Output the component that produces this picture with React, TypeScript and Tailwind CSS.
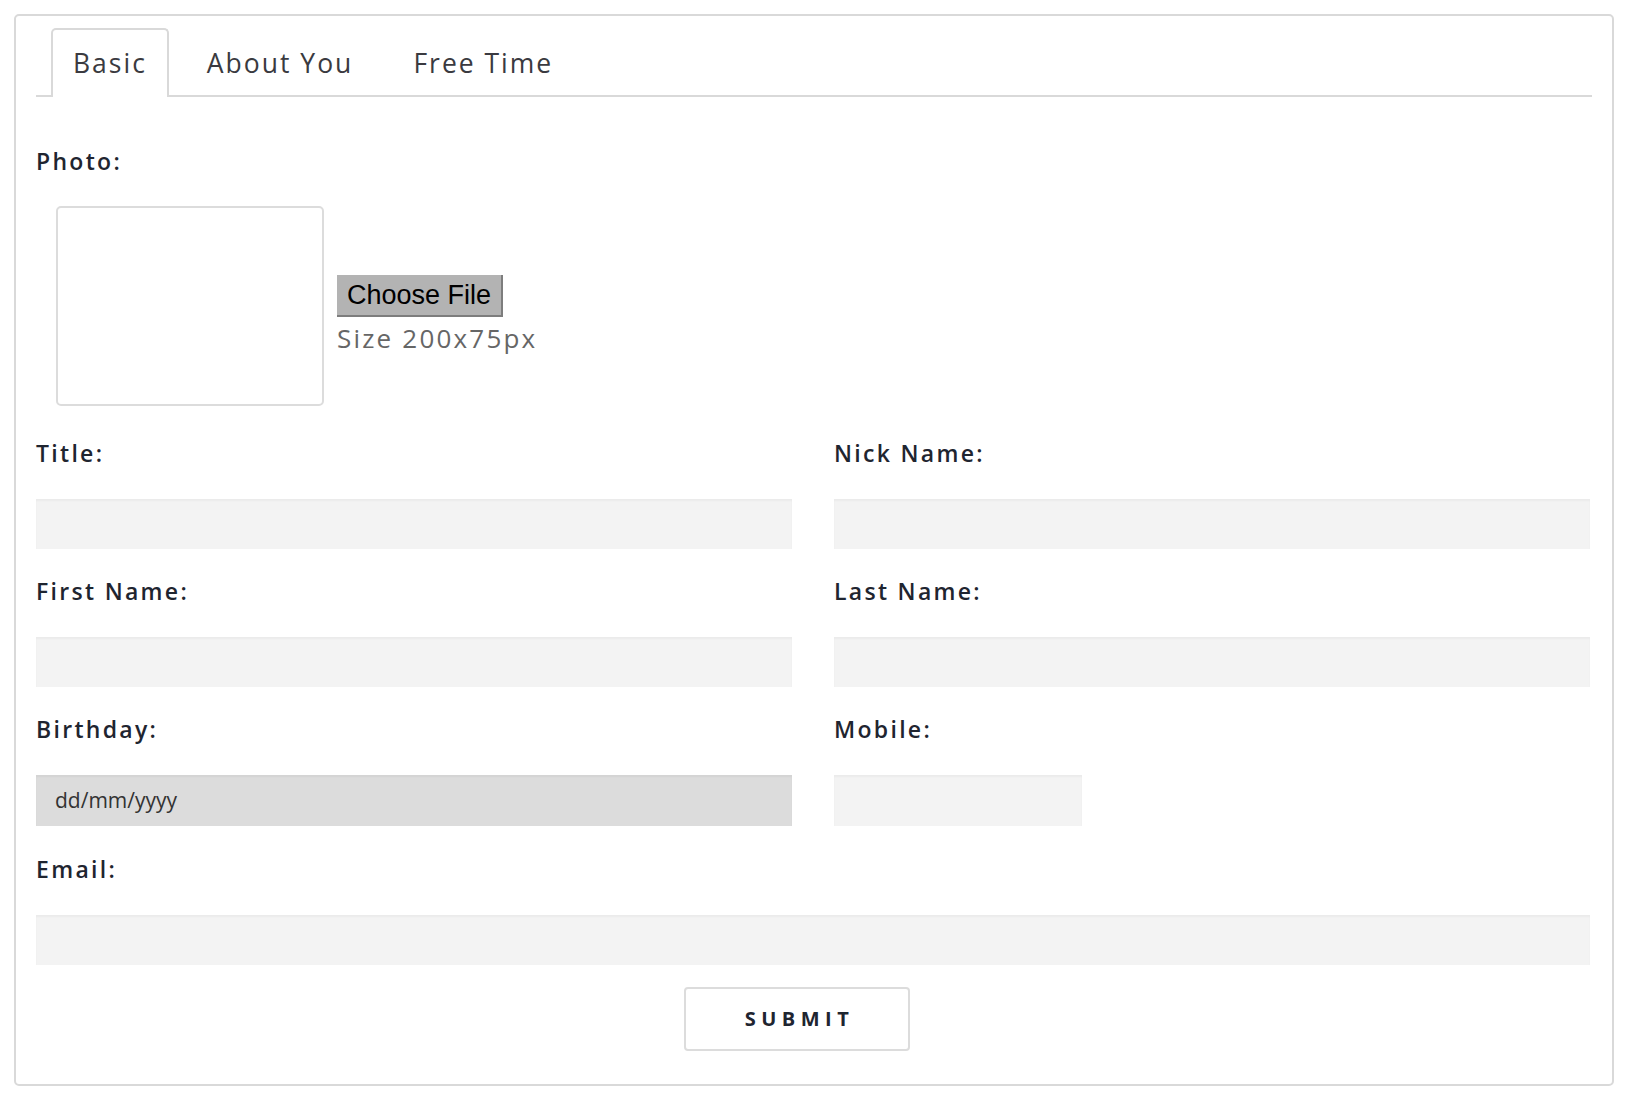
import React from "react";

const font = { fontFamily: '"Open Sans", "Liberation Sans", sans-serif' };

function Label({ children }: { children: React.ReactNode }) {
  return (
    <div className="h-[30px] leading-[30px] text-[23px] font-semibold tracking-[2.3px] text-[#1f2530]">
      {children}
    </div>
  );
}

function Field({ label, children }: { label: string; children: React.ReactNode }) {
  return (
    <div className="flex flex-col">
      <Label>{label}</Label>
      <div className="mt-[31px]">{children}</div>
    </div>
  );
}

function Input({ className = "" }: { className?: string }) {
  return (
    <div
      className={`h-[50px] bg-[#f3f3f3] shadow-[inset_0_2px_2px_rgba(0,0,0,0.035)] ${className}`}
    />
  );
}

export default function App() {
  return (
    <div className="bg-white min-h-[1096px] px-[14px] pt-[14px]" style={font}>
      <div className="border-2 border-[#d9d9d9] rounded-[5px] px-[20px] pt-[12px] pb-[33px]">
        {/* Tabs */}
        <div className="flex items-end gap-[16px] border-b-2 border-[#d9d9d9] pl-[15px]">
          <div className="h-[69px] px-[20px] border-2 border-b-0 border-[#d9d9d9] rounded-t-[5px] bg-white -mb-[2px] flex items-center text-[26.5px] tracking-[2px] text-[#3a3a40]">
            Basic
          </div>
          <div className="h-[69px] px-[20px] border-2 border-transparent border-b-0 -mb-[2px] flex items-center text-[26.5px] tracking-[2px] text-[#3a3a40]">
            About You
          </div>
          <div className="h-[69px] px-[20px] border-2 border-transparent border-b-0 -mb-[2px] flex items-center text-[26.5px] tracking-[2px] text-[#3a3a40]">
            Free Time
          </div>
        </div>

        {/* Photo */}
        <div className="mt-[49px]">
          <Label>Photo:</Label>
        </div>
        <div className="mt-[30px] ml-[20px] flex items-start">
          <div className="w-[268px] h-[200px] border-2 border-[#dcdcdc] rounded-[5px] bg-white" />
          <div className="ml-[13px] mt-[69px] flex flex-col items-start">
            <button
              className="h-[42px] px-[10px] bg-[#b3b3b3] border-r-2 border-b-2 border-[#7d7d7d] text-[27px] leading-none text-black"
              style={{ fontFamily: '"Liberation Sans", Arial, sans-serif' }}
            >
              Choose File
            </button>
            <div className="mt-[3px] text-[26px] leading-[36px] tracking-[2.2px] text-[#666666]">
              Size 200x75px
            </div>
          </div>
        </div>

        {/* Fields */}
        <div className="mt-[32px] mr-[2px] grid grid-cols-2 gap-x-[42px] gap-y-[27px]">
          <Field label="Title:">
            <Input />
          </Field>
          <Field label="Nick Name:">
            <Input />
          </Field>
          <Field label="First Name:">
            <Input />
          </Field>
          <Field label="Last Name:">
            <Input />
          </Field>
          <Field label="Birthday:">
            <div className="h-[51px] bg-[#dcdcdc] shadow-[inset_0_2px_2px_rgba(0,0,0,0.04)] flex items-center pl-[19px] text-[21px] text-[#333]">
              dd/mm/yyyy
            </div>
          </Field>
          <Field label="Mobile:">
            <Input className="w-[248px] h-[51px]" />
          </Field>
          <div className="col-span-2 mt-[1px]">
            <Field label="Email:">
              <Input />
            </Field>
          </div>
        </div>

        <div className="mt-[22px] pr-[35px] flex justify-center">
          <button className="w-[226px] h-[64px] border-2 border-[#dcdcdc] rounded-[4px] bg-white text-[20px] font-bold tracking-[5.5px] pl-[6px] text-[#1f2530]">
            SUBMIT
          </button>
        </div>
      </div>
    </div>
  );
}
